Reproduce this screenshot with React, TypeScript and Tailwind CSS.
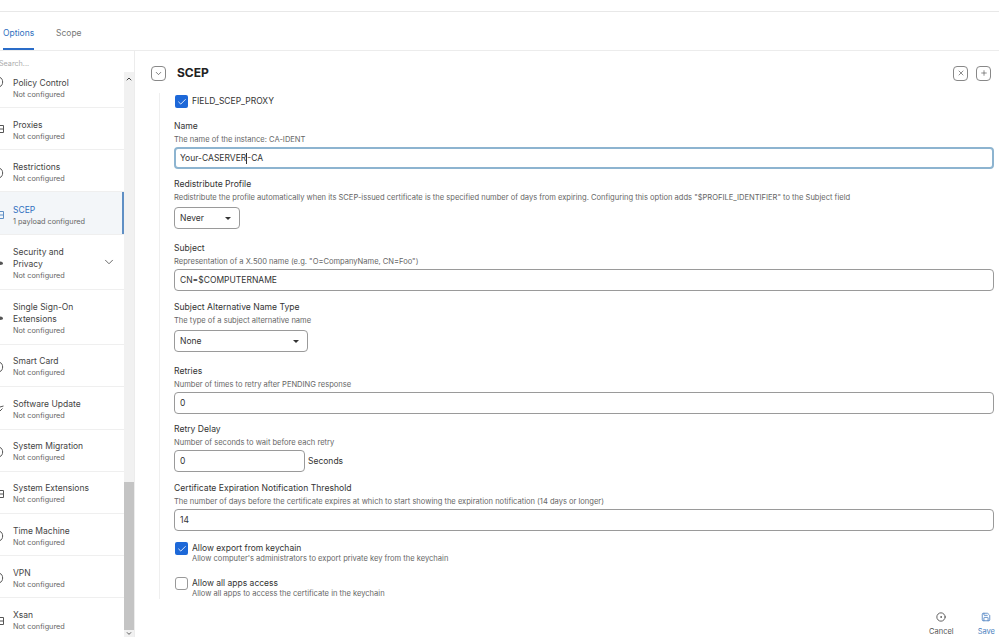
import { Check, ChevronDown, ChevronUp, CircleDot, Plus, Save, X } from 'lucide-react';

const rows = [
  { name: ['Policy Control'], sub: 'Not configured', h: 'h-[36px] pb-[3px]', icon: 'arc', iconCls: '-mt-[12px]' },
  { name: ['Proxies'], sub: 'Not configured', h: 'h-[42px] pt-[3px]', icon: 'box', iconCls: '-mt-[3px]' },
  { name: ['Restrictions'], sub: 'Not configured', h: 'h-[42px] pt-[4px]', icon: 'arc' },
  { name: ['SCEP'], sub: '1 payload configured', h: 'h-[43px] pt-[4px]', icon: 'box', active: true },
  { name: ['Security and', 'Privacy'], sub: 'Not configured', h: 'h-[55px] pt-[2px]', icon: 'dot', chevron: true },
  { name: ['Single Sign-On', 'Extensions'], sub: 'Not configured', h: 'h-[55px] pt-[2px]', icon: 'dot' },
  { name: ['Smart Card'], sub: 'Not configured', h: 'h-[42px] pt-[2px]', icon: 'arc' },
  { name: ['Software Update'], sub: 'Not configured', h: 'h-[43px] pt-[2px]', icon: 'cross' },
  { name: ['System Migration'], sub: 'Not configured', h: 'h-[42px] pt-[2px]', icon: 'arc' },
  { name: ['System Extensions'], sub: 'Not configured', h: 'h-[42px] pt-[2px]', icon: 'box' },
  { name: ['Time Machine'], sub: 'Not configured', h: 'h-[42px] pt-[3px]', icon: 'arc' },
  { name: ['VPN'], sub: 'Not configured', h: 'h-[42px] pt-[3px]', icon: 'arc' },
  { name: ['Xsan'], sub: 'Not configured', h: 'h-[43px] pt-[3px]', icon: 'box' },
];

// only the right edge of each icon is visible, the list is scrolled sideways
function RowIcon({ kind, active, className }: { kind: string; active?: boolean; className?: string }) {
  const c = active ? '#5f8fc4' : '#555';
  return (
    <svg width="5" height="10" viewBox="0 0 5 10" fill="none" stroke={c} strokeWidth="1" className={className}>
      {kind === 'arc' && <path d="M0 .5C3.500 1.500 3.500 8.500 0 9.500" />}
      {kind === 'box' && <path d="M0 1.500H3.500V8.500H0M0 5H3.500" />}
      {kind === 'dot' && <path d="M0 3.500C2.500 3.500 3 5 3 5.500S2.500 7 0 7Z" fill={c} stroke="none" />}
      {kind === 'cross' && <path d="M0 3L3.500 2M0 7L2.500 4.500" />}
    </svg>
  );
}

function Field({ label, hint, children }: { label: string; hint: string; children: React.ReactNode }) {
  return (
    <div className="flex flex-col">
      <div className="text-[8.6px] leading-[12px] text-[#333]">{label}</div>
      <div className="text-[7.55px] leading-[11px] mt-[2px] mb-[2px] text-[#666]">{hint}</div>
      {children}
    </div>
  );
}

function Input({ value, w }: { value: string; w?: string }) {
  return (
    <div className={`h-[22px] ${w ?? 'w-full'} border border-[#9a9a9a] rounded-[4px] px-[5px] flex items-center text-[8.5px] text-[#333]`}>
      {value}
    </div>
  );
}

function Select({ value, w }: { value: string; w: string }) {
  return (
    <div className={`h-[22px] mt-[2px] ${w} border border-[#9a9a9a] rounded-[4px] px-[5px] flex items-center justify-between text-[8.5px] text-[#333]`}>
      {value}
      <span className="mr-[3px] w-0 h-0 border-x-[3px] border-x-transparent border-t-[3px] border-t-[#333]" />
    </div>
  );
}

function CheckBox({ on }: { on?: boolean }) {
  return on ? (
    <span className="w-[13px] h-[13px] rounded-[2px] bg-[#1d68d8] flex items-center justify-center shrink-0">
      <Check size={10} color="#fff" strokeWidth={2} />
    </span>
  ) : (
    <span className="w-[13px] h-[13px] rounded-[3px] border border-[#999] bg-white shrink-0" />
  );
}

export default function App() {
  return (
    <div className="w-[999px] h-[637px] overflow-hidden bg-white flex flex-col font-['Inter',sans-serif]">
      <div className="h-[12px] border-b border-[#e8e8e8] shrink-0" />

      {/* tabs */}
      <div className="h-[39px] shrink-0 border-b border-[#ececec] flex items-start pt-[16px] text-[8.5px]">
        <div className="ml-[3px] w-[31px] h-[22px] border-b-[2px] border-[#2a6cc8] text-[#2f6fc0] leading-[10px]">Options</div>
        <div className="ml-[22px] text-[#777] leading-[10px]">Scope</div>
      </div>

      <div className="flex flex-1 min-h-0">
        {/* sidebar */}
        <div className="w-[135px] shrink-0 flex flex-col border-r border-[#ececec]">
          <div className="h-[21px] shrink-0 pt-[8px] -ml-[1px] text-[7.2px] leading-[9px] text-[#aaa]">Search...</div>
          <div className="flex flex-1 min-h-0">
            <div className="w-[124px] flex flex-col">
              {rows.map((r) => (
                <div
                  key={r.name[0]}
                  className={`${r.h} shrink-0 flex items-center border-b border-[#efefef] relative ${r.active ? 'bg-[#f3f6f9]' : ''}`}
                >
                  <div className="w-[13px] flex items-center shrink-0">
                    <RowIcon kind={r.icon} active={r.active} className={r.iconCls} />
                  </div>
                  <div className="flex-1">
                    {r.name.map((n) => (
                      <div key={n} className={`text-[8.5px] leading-[12px] ${r.active ? 'text-[#2f6fc0]' : 'text-[#444]'}`}>{n}</div>
                    ))}
                    <div className="mt-[1px] text-[7.3px] leading-[10px] text-[#666]">{r.sub}</div>
                  </div>
                  {r.chevron && <ChevronDown size={14} color="#555" strokeWidth={1.5} className="mr-[8px] -mt-[2px]" />}
                  {r.active && <span className="absolute right-0 top-0 bottom-0 w-[2px] bg-[#5f8fc4]" />}
                </div>
              ))}
            </div>
            <div className="w-[10px] bg-[#f1f1f1] flex flex-col items-center">
              <ChevronUp size={8} color="#444" strokeWidth={3} className="mt-[3px]" />
              <div className="w-full h-[148px] bg-[#c4c4c4] mt-auto" />
              <ChevronDown size={8} color="#444" strokeWidth={3} className="h-[7px]" />
            </div>
          </div>
        </div>

        {/* main panel */}
        <div className="flex-1 min-w-0 flex flex-col">
          <div className="h-[42px] pt-[2px] shrink-0 flex items-center pl-[16px] pr-[8px]">
            <span className="w-[15px] h-[15px] border border-[#888] rounded-[4px] flex items-center justify-center">
              <ChevronDown size={9} color="#555" />
            </span>
            <span className="ml-[11px] text-[12px] font-bold text-[#222] flex-1">SCEP</span>
            <span className="w-[15px] h-[15px] border border-[#888] rounded-[4px] flex items-center justify-center">
              <X size={8} color="#555" />
            </span>
            <span className="ml-[8px] w-[15px] h-[15px] border border-[#888] rounded-[4px] flex items-center justify-center">
              <Plus size={8} color="#555" />
            </span>
          </div>

          <div className="ml-[24px] mr-[5px] border-l border-[#efefef] pl-[14px] pt-[2px] h-[508px] flex flex-col">
            <div className="flex items-center gap-[4px] ml-[1px] h-[13px]">
              <CheckBox on />
              <span className="text-[8.5px] text-[#333]">FIELD_SCEP_PROXY</span>
            </div>
            <div className="mt-[12px]">
              <Field label="Name" hint="The name of the instance: CA-IDENT">
                <div className="h-[22px] w-full border-[2px] border-[#8db4d0] rounded-[4px] px-[4px] flex items-center text-[8.5px] text-[#333]">
                  Your-CASERVER<span className="w-px h-[11px] bg-[#333]" />-CA
                </div>
              </Field>
            </div>
            <div className="mt-[9px]">
              <Field
                label="Redistribute Profile"
                hint={'Redistribute the profile automatically when its SCEP-issued certificate is the specified number of days from expiring. Configuring this option adds "$PROFILE_IDENTIFIER" to the Subject field'}
              >
                <Select value="Never" w="w-[66px]" />
              </Field>
            </div>
            <div className="mt-[13px]">
              <Field label="Subject" hint={'Representation of a X.500 name (e.g. "O=CompanyName, CN=Foo")'}>
                <Input value="CN=$COMPUTERNAME" />
              </Field>
            </div>
            <div className="mt-[10px]">
              <Field label="Subject Alternative Name Type" hint="The type of a subject alternative name">
                <Select value="None" w="w-[134px]" />
              </Field>
            </div>
            <div className="mt-[13px]">
              <Field label="Retries" hint="Number of times to retry after PENDING response">
                <Input value="0" />
              </Field>
            </div>
            <div className="mt-[9px]">
              <Field label="Retry Delay" hint="Number of seconds to wait before each retry">
                <div className="flex items-center gap-[3px]">
                  <Input value="0" w="w-[131px]" />
                  <span className="text-[8.5px] text-[#333]">Seconds</span>
                </div>
              </Field>
            </div>
            <div className="mt-[10px]">
              <Field
                label="Certificate Expiration Notification Threshold"
                hint="The number of days before the certificate expires at which to start showing the expiration notification (14 days or longer)"
              >
                <Input value="14" />
              </Field>
            </div>
            <div className="mt-[11px] flex gap-[4px] ml-[1px]">
              <CheckBox on />
              <div>
                <div className="text-[8.5px] leading-[12px] text-[#333]">Allow export from keychain</div>
                <div className="text-[7.55px] leading-[10px] text-[#666]">Allow computer's administrators to export private key from the keychain</div>
              </div>
            </div>
            <div className="mt-[13px] flex gap-[4px] ml-[1px]">
              <CheckBox />
              <div>
                <div className="text-[8.5px] leading-[12px] text-[#333]">Allow all apps access</div>
                <div className="text-[7.55px] leading-[10px] text-[#666]">Allow all apps to access the certificate in the keychain</div>
              </div>
            </div>
          </div>

          <div className="flex-1 flex justify-end items-start pt-[13px] pr-[4px] gap-[24px]">
            <div className="flex flex-col items-center text-[7.5px] leading-[10px] text-[#555]">
              <CircleDot size={10} color="#444" />
              <span className="mt-[5px]">Cancel</span>
            </div>
            <div className="flex flex-col items-center text-[7.5px] leading-[10px] text-[#4a7fc0]">
              <Save size={10} color="#4a7fc0" />
              <span className="mt-[5px]">Save</span>
            </div>
          </div>
        </div>
      </div>
    </div>
  );
}
